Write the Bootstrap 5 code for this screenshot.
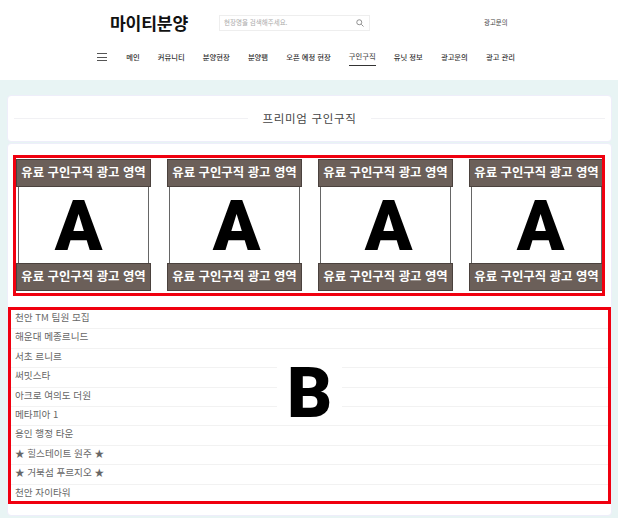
<!DOCTYPE html>
<html lang="ko">

<head>
    <meta charset="UTF-8" />
    <title>마이티분양</title>
    <link rel="stylesheet" href="https://cdn.jsdelivr.net/npm/bootstrap@5.3.3/dist/css/bootstrap.min.css" />
    <style>
        body { font-family: "Noto Sans CJK KR", "Noto Sans", sans-serif; background: #fff; overflow: hidden; }
        .site-head { height: 80px; }
        .head-top { height: 44px; padding: 15px 0 0 110px; }
        .site-logo { width: 109px; font-size: 17.2px; font-weight: 700; line-height: 16px; color: #111; letter-spacing: -.2px; white-space: nowrap; }
        .site-search { width: 151px; height: 16px; border: 1px solid #eee; padding: 0 5px 0 4px; font-size: 6.5px; color: #aaa; }
        .head-link { margin-left: 114px; font-size: 6.4px; line-height: 16px; color: #444; }
        .site-nav { padding-left: 97px; gap: 18.2px; height: 34px; font-size: 7.3px; font-weight: 500; color: #333; }
        .site-nav a { color: #333; text-decoration: none; line-height: 16px; padding-bottom: 1px; margin-top: -8px; white-space: nowrap; }
        .site-nav a.now { border-bottom: 1px solid #333; color: #555; }
        .burger { width: 10px; height: 8px; margin: -8px 1px 0 0; border-top: 1px solid #555; border-bottom: 1px solid #555; position: relative; }
        .burger::after { content: ""; position: absolute; left: 0; right: 0; top: 2.5px; border-top: 1px solid #555; }
        .page-bg { background: #e8f4f4; height: 440px; padding: 15px 6px 0 7px; }
        .title-card { height: 47px; border: 1px solid #eeeefa; border-radius: 4px; margin-bottom: 1px; padding: 0 6px; }
        .title-line { flex: 1; border-top: 1px solid #f1f1f4; }
        .title-text { padding: 0 14px; font-size: 11.5px; letter-spacing: .7px; color: #444; }
        .list-card { height: 373px; border: 1px solid #eeeefa; border-radius: 4px; padding: 11px 0 0 1px; }
        .red-a { margin: 0 6px 0 4px; height: 141px; border: 3px solid #f0000f; padding: 1px 0 0 0; overflow: hidden; gap: 16px; }
        .ad-tile { width: 135px; flex: none; }
        .ad-band { height: 28px; background: #6b5f59; border: 1px solid #4b423e; color: #fff; font-size: 12.4px; font-weight: 700; line-height: 25px; text-align: center; white-space: nowrap; }
        .ad-body { height: 76px; margin: 0 2px; border: solid #666; border-width: 0 1px; font-family: Roboto, sans-serif; font-weight: 900; font-size: 70px; line-height: 78px; color: #000; text-align: center; }
        .ad-tile:nth-child(1) .ad-body { padding-right: 10px; }
        .ad-tile:nth-child(2) .ad-body { padding-left: 4px; }
        .ad-tile:nth-child(3) .ad-body { padding-left: 6px; }
        .ad-tile:nth-child(4) .ad-body { padding-left: 8px; }
        .red-b { position: relative; margin: 11px 0 0 -1px; height: 197px; border: 3px solid #f0000f; }
        .red-b .list-group-item { height: 19.4px; padding: 0 0 0 4px; border-color: #f2f2f2; font-size: 9.6px; line-height: 14px; color: #666; background: transparent; }
        .big-b { position: absolute; left: 266px; top: 49px; width: 65px; height: 66px; background: #fff; font-family: Roboto, sans-serif; font-weight: 900; font-size: 70px; line-height: 68px; text-align: center; color: #000; }
    </style>
</head>

<body>
    <!-- header -->
    <header class="site-head">
        <div class="head-top d-flex">
            <div class="site-logo">마이티분양</div>
            <div class="site-search d-flex justify-content-between align-items-center">
                <span>현장명을 검색해주세요.</span>
                <svg width="8" height="8" viewBox="0 0 16 16" fill="none" stroke="#777" stroke-width="1.6">
                    <circle cx="6.5" cy="6.5" r="5" />
                    <path d="M10.5 10.5 15 15" />
                </svg>
            </div>
            <div class="head-link">광고문의</div>
        </div>
        <nav class="site-nav d-flex align-items-center">
            <span class="burger"></span>
            <a href="#">메인</a>
            <a href="#">커뮤니티</a>
            <a href="#">분양현장</a>
            <a href="#">분양팸</a>
            <a href="#">오픈 예정 현장</a>
            <a href="#" class="now">구인구직</a>
            <a href="#">유닛 정보</a>
            <a href="#">광고문의</a>
            <a href="#">광고 관리</a>
        </nav>
    </header>

    <div class="page-bg">
        <div class="title-card card flex-row align-items-center">
            <span class="title-line"></span>
            <span class="title-text">프리미엄 구인구직</span>
            <span class="title-line"></span>
        </div>

        <div class="list-card card">
            <!-- A -->
            <div class="red-a d-flex">
                <div class="ad-tile">
                    <div class="ad-band">유료 구인구직 광고 영역</div>
                    <div class="ad-body">A</div>
                    <div class="ad-band">유료 구인구직 광고 영역</div>
                </div>
                <div class="ad-tile">
                    <div class="ad-band">유료 구인구직 광고 영역</div>
                    <div class="ad-body">A</div>
                    <div class="ad-band">유료 구인구직 광고 영역</div>
                </div>
                <div class="ad-tile">
                    <div class="ad-band">유료 구인구직 광고 영역</div>
                    <div class="ad-body">A</div>
                    <div class="ad-band">유료 구인구직 광고 영역</div>
                </div>
                <div class="ad-tile">
                    <div class="ad-band">유료 구인구직 광고 영역</div>
                    <div class="ad-body">A</div>
                    <div class="ad-band">유료 구인구직 광고 영역</div>
                </div>
            </div>

            <!-- B -->
            <div class="red-b">
                <ul class="list-group list-group-flush">
                    <li class="list-group-item">천안 TM 팀원 모집</li>
                    <li class="list-group-item">해운대 메종르니드</li>
                    <li class="list-group-item">서초 르니르</li>
                    <li class="list-group-item">써밋스타</li>
                    <li class="list-group-item">아크로 여의도 더원</li>
                    <li class="list-group-item">메타피아 1</li>
                    <li class="list-group-item">용인 행정 타운</li>
                    <li class="list-group-item">★ 힐스테이트 원주 ★</li>
                    <li class="list-group-item">★ 거북섬 푸르지오 ★</li>
                    <li class="list-group-item">천안 자이타워</li>
                </ul>
                <div class="big-b">B</div>
            </div>
        </div>
    </div>

    <script src="https://cdn.jsdelivr.net/npm/bootstrap@5.3.3/dist/js/bootstrap.bundle.min.js"></script>
</body>

</html>
